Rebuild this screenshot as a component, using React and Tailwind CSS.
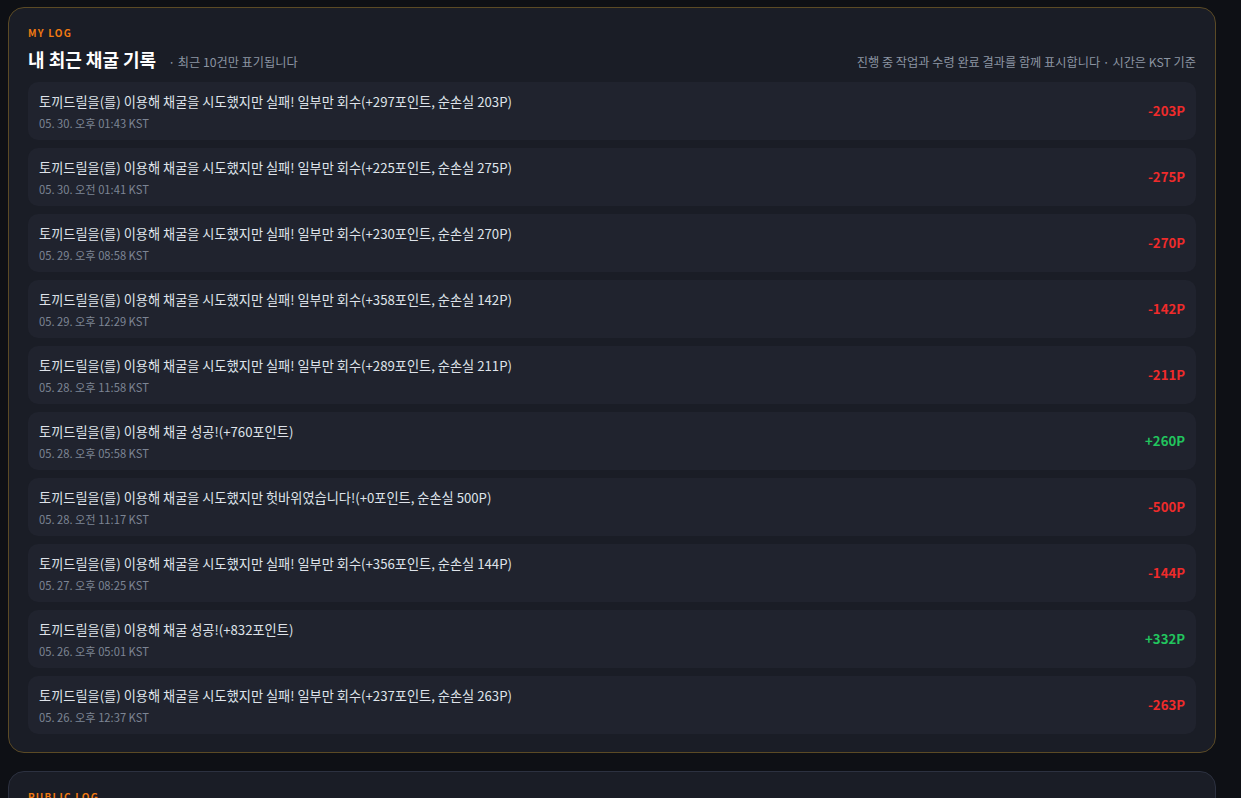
const logs = [
  { text: "토끼드릴을(를) 이용해 채굴을 시도했지만 실패! 일부만 회수(+297포인트, 순손실 203P)", time: "05. 30. 오후 01:43 KST", amount: "-203P", win: false },
  { text: "토끼드릴을(를) 이용해 채굴을 시도했지만 실패! 일부만 회수(+225포인트, 순손실 275P)", time: "05. 30. 오전 01:41 KST", amount: "-275P", win: false },
  { text: "토끼드릴을(를) 이용해 채굴을 시도했지만 실패! 일부만 회수(+230포인트, 순손실 270P)", time: "05. 29. 오후 08:58 KST", amount: "-270P", win: false },
  { text: "토끼드릴을(를) 이용해 채굴을 시도했지만 실패! 일부만 회수(+358포인트, 순손실 142P)", time: "05. 29. 오후 12:29 KST", amount: "-142P", win: false },
  { text: "토끼드릴을(를) 이용해 채굴을 시도했지만 실패! 일부만 회수(+289포인트, 순손실 211P)", time: "05. 28. 오후 11:58 KST", amount: "-211P", win: false },
  { text: "토끼드릴을(를) 이용해 채굴 성공!(+760포인트)", time: "05. 28. 오후 05:58 KST", amount: "+260P", win: true },
  { text: "토끼드릴을(를) 이용해 채굴을 시도했지만 헛바위였습니다!(+0포인트, 순손실 500P)", time: "05. 28. 오전 11:17 KST", amount: "-500P", win: false },
  { text: "토끼드릴을(를) 이용해 채굴을 시도했지만 실패! 일부만 회수(+356포인트, 순손실 144P)", time: "05. 27. 오후 08:25 KST", amount: "-144P", win: false },
  { text: "토끼드릴을(를) 이용해 채굴 성공!(+832포인트)", time: "05. 26. 오후 05:01 KST", amount: "+332P", win: true },
  { text: "토끼드릴을(를) 이용해 채굴을 시도했지만 실패! 일부만 회수(+237포인트, 순손실 263P)", time: "05. 26. 오후 12:37 KST", amount: "-263P", win: false },
];

const LogRow = ({ log }) => (
  <div className="flex items-center justify-between h-[58px] px-[11px] rounded-[10px] bg-[#20232e]">
    <div className="flex flex-col">
      <span className="text-[13.2px] leading-[18px] text-[#dfe3ea]">{log.text}</span>
      <span className="mt-[5px] text-[11.2px] leading-[14px] text-[#7d8594]">{log.time}</span>
    </div>
    <span className={`text-[13.2px] font-bold ${log.win ? "text-[#22c55e]" : "text-[#ef2b2b]"}`}>
      {log.amount}
    </span>
  </div>
);

export default function App() {
  return (
    <div
      className="min-h-[798px] bg-[#0e1015] px-2 pt-[7px] pb-0 overflow-hidden"
      style={{ fontFamily: '"Noto Sans CJK KR", "Noto Sans", sans-serif' }}
    >
      <div className="w-[1208px] rounded-[16px] border border-[#5b4a25] bg-[#1a1d26] px-[19px] pt-[18px] pb-[18px]">
        <div className="text-[10px] leading-[14px] font-bold tracking-[0.12em] text-[#f07a12]">MY LOG</div>
        <div className="flex items-end justify-between mt-[6px] mb-[10px]">
          <div className="flex items-baseline gap-3">
            <h2 className="text-[18px] leading-[26px] font-bold text-white">내 최근 채굴 기록</h2>
            <span className="text-[12.2px] text-[#8c95a3]">· 최근 10건만 표기됩니다</span>
          </div>
          <span className="text-[12.2px] leading-[18px] mb-[1px] text-[#8c95a3]">
            진행 중 작업과 수령 완료 결과를 함께 표시합니다 · 시간은 KST 기준
          </span>
        </div>
        <div className="flex flex-col gap-2">
          {logs.map((log, i) => (
            <LogRow key={i} log={log} />
          ))}
        </div>
      </div>

      <div className="mt-[18px] w-[1208px] h-[80px] rounded-[16px] border border-[#2c3140] bg-[#1a1d26] px-[19px] pt-[18px]">
        <div className="text-[10px] leading-[14px] font-bold tracking-[0.12em] text-[#f07a12]">PUBLIC LOG</div>
      </div>
    </div>
  );
}
